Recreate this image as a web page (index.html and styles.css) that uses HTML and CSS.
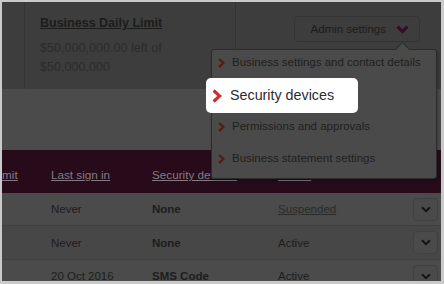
FILE: index.html
```html
<!DOCTYPE html>
<html lang="en">

<head>
    <meta charset="UTF-8">
    <meta name="viewport" content="width=device-width, initial-scale=1.0">
    <title>Users</title>
    <link rel="stylesheet" href="styles.css">
</head>

<body>
    <div class="screen">
        <div class="summary">
            <div class="summary-edge"></div>
            <div class="limit">
                <a class="limit-title">Business Daily Limit</a>
                <p class="limit-amount">$50,000,000.00 left of<br>$50,000,000</p>
            </div>
            <div class="actions">
                <div class="admin">
                    <button class="admin-button">
                        Admin settings
                        <svg width="13" height="9" viewBox="0 0 13 9">
                            <polyline points="1.6,1.6 6.5,6.6 11.4,1.6" fill="none" stroke="#3a0b28" stroke-width="3" />
                        </svg>
                    </button>
                    <ul class="menu">
                        <li class="menu-item">
                            <svg width="7" height="10" viewBox="0 0 7 10">
                                <polyline points="1.2,1 5.4,5 1.2,9" fill="none" stroke="#5b1716" stroke-width="2.2" />
                            </svg>
                            Business settings and contact details
                        </li>
                        <li class="menu-item spot">
                            <svg width="10" height="14" viewBox="0 0 10 14">
                                <polyline points="1.6,1.5 7.6,7 1.6,12.5" fill="none" stroke="#c8322c" stroke-width="3.2" />
                            </svg>
                            Security devices
                        </li>
                        <li class="menu-item">
                            <svg width="7" height="10" viewBox="0 0 7 10">
                                <polyline points="1.2,1 5.4,5 1.2,9" fill="none" stroke="#5b1716" stroke-width="2.2" />
                            </svg>
                            Permissions and approvals
                        </li>
                        <li class="menu-item">
                            <svg width="7" height="10" viewBox="0 0 7 10">
                                <polyline points="1.2,1 5.4,5 1.2,9" fill="none" stroke="#5b1716" stroke-width="2.2" />
                            </svg>
                            Business statement settings
                        </li>
                    </ul>
                </div>
            </div>
        </div>

        <div class="band"></div>

        <div class="table">
            <div class="row head">
                <a class="cell cut">Limit</a>
                <a class="cell">Last sign in</a>
                <a class="cell">Security devices</a>
                <a class="cell">Status</a>
                <span></span>
            </div>
            <div class="row">
                <span class="cell"></span>
                <span class="cell">Never</span>
                <span class="cell strong">None</span>
                <a class="cell link">Suspended</a>
                <button class="toggle"><svg width="10" height="7" viewBox="0 0 10 7"><polyline points="1,1.2 5,5.2 9,1.2" fill="none" stroke="#141414" stroke-width="2" /></svg></button>
            </div>
            <div class="row alt">
                <span class="cell"></span>
                <span class="cell">Never</span>
                <span class="cell strong">None</span>
                <span class="cell">Active</span>
                <button class="toggle"><svg width="10" height="7" viewBox="0 0 10 7"><polyline points="1,1.2 5,5.2 9,1.2" fill="none" stroke="#141414" stroke-width="2" /></svg></button>
            </div>
            <div class="row">
                <span class="cell"></span>
                <span class="cell">20 Oct 2016</span>
                <span class="cell strong">SMS Code</span>
                <span class="cell">Active</span>
                <button class="toggle"><svg width="10" height="7" viewBox="0 0 10 7"><polyline points="1,1.2 5,5.2 9,1.2" fill="none" stroke="#141414" stroke-width="2" /></svg></button>
            </div>
        </div>
    </div>
</body>

</html>
```

FILE: styles.css
```css
* {
    box-sizing: border-box;
}

body,
html {
    margin: 0;
    background-color: #cacaca;
    font-family: "Liberation Sans", Arial, sans-serif;
}

.screen {
    position: relative;
    margin: 2px 3px 0 2px;
    height: 279px;
    overflow: hidden;
    background-color: #4b4b4b;
}

/* top panel */
.summary {
    display: flex;
    height: 87px;
    background-color: #3d3d3d;
}

.summary-edge {
    width: 23px;
    border-right: 1px solid #343434;
}

.limit {
    width: 211px;
    padding: 13px 0 0 15px;
    border-right: 1px solid #343434;
}

.limit-title {
    display: block;
    font-size: 12.5px;
    line-height: 16px;
    font-weight: 700;
    color: #1c1c1c;
    text-decoration: underline;
}

.limit-amount {
    margin: 8px 0 0;
    font-size: 12.6px;
    line-height: 18.5px;
    color: #2b2b2b;
}

.actions {
    flex: 1;
    display: flex;
    justify-content: flex-end;
    align-items: flex-start;
    padding: 14px 21px 0 0;
}

.admin {
    position: relative;
}

.admin-button {
    display: flex;
    align-items: center;
    gap: 10px;
    height: 26px;
    padding: 0 10px 0 16px;
    border: 1px solid #343434;
    border-radius: 4px;
    background-color: #3d3d3d;
    font-family: inherit;
    font-size: 11.5px;
    color: #1c1c1c;
}

/* dropdown */
.menu {
    position: absolute;
    top: 33px;
    right: -17px;
    z-index: 2;
    width: 226px;
    margin: 0;
    padding: 0;
    list-style: none;
    background-color: #4a4a4a;
    border: 1px solid #2c2c2c;
    border-radius: 3px;
    box-shadow: 1px 2px 3px rgba(0, 0, 0, 0.25);
}

.menu::before {
    content: "";
    position: absolute;
    top: -6px;
    right: 28px;
    width: 10px;
    height: 10px;
    background-color: #4a4a4a;
    border-top: 1px solid #2c2c2c;
    border-left: 1px solid #2c2c2c;
    transform: rotate(45deg);
}

.menu-item {
    display: flex;
    align-items: flex-start;
    gap: 7px;
    height: 32px;
    padding: 6px 0 0 6px;
    font-size: 11.5px;
    line-height: 13px;
    color: #1f1f1f;
}

.menu-item svg {
    margin-top: 2px;
}

.menu-item.spot {
    position: relative;
    z-index: 1;
    align-items: center;
    gap: 8px;
    width: 152px;
    height: 35px;
    margin: -4px 0 1px -6px;
    padding: 0 0 0 6px;
    background-color: #fff;
    border-radius: 5px;
    font-size: 14.3px;
    color: #2b2b2e;
}

.menu-item.spot svg {
    margin-top: 0;
}

/* table */
.band {
    height: 61px;
}

.row {
    display: grid;
    grid-template-columns: 49px 101px 126px 1fr 25px;
    align-items: center;
    height: 33px;
    padding-right: 3px;
    font-size: 11.5px;
    color: #1d1d1d;
    border-bottom: 1px solid #404040;
}

.row.alt {
    height: 34px;
    background-color: #474747;
}

.row.head {
    height: 43px;
    border-bottom: none;
    background-color: #270b1a;
    font-size: 11.7px;
}

.head .cell {
    color: #857a82;
    text-decoration: underline;
    padding-top: 6px;
}

.cell.cut {
    margin-left: -9px;
}

.cell.strong {
    font-weight: 700;
}

.cell.link {
    color: #2a2a2a;
    text-decoration: underline;
}

.toggle {
    display: flex;
    align-items: center;
    justify-content: center;
    width: 25px;
    height: 23px;
    padding: 0;
    background-color: #4a4a4a;
    border: 1px solid #414141;
    border-radius: 4px;
}
```
